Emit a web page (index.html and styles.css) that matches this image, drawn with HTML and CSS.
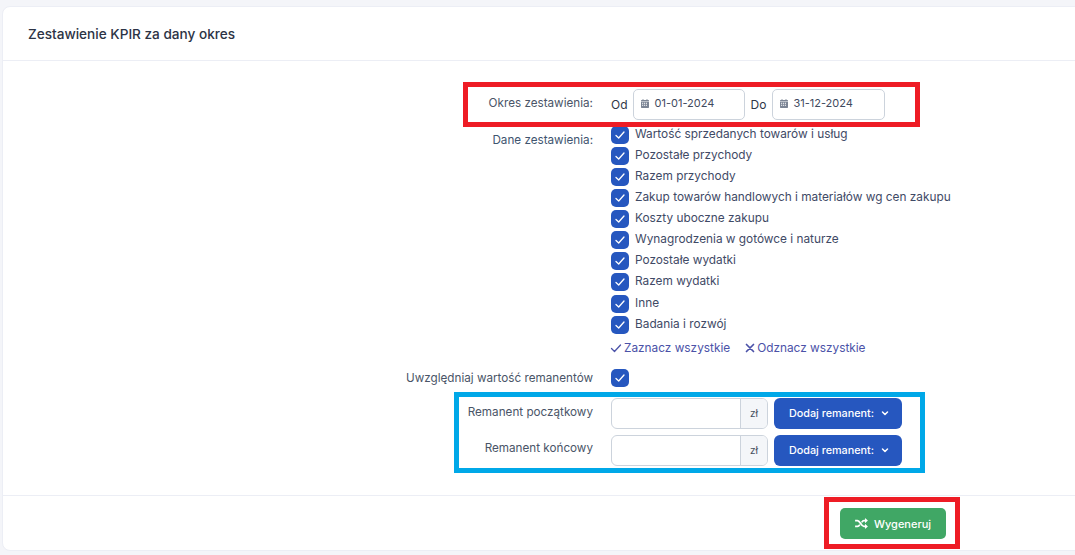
FILE: index.html
```html
<!DOCTYPE html>
<html lang="pl">
<head>
<meta charset="utf-8">
<title>Zestawienie KPIR</title>
<link rel="stylesheet" href="styles.css">
</head>
<body>
<svg class="sprite" aria-hidden="true">
  <symbol id="cal" viewBox="0 0 10 11"><path fill="currentColor" d="M2 0h1v1h4V0h1v1h1.2c.5 0 .8.3.8.8V3H0V1.800C0 1.300.3 1 .8 1H2zM0 3.600h10v6.600c0 .5-.3.800-.8.800H.8c-.5 0-.8-.3-.8-.8zm1.300 1v1.300h1.400V4.600zm2.400 0v1.300h1.400V4.600zm2.400 0v1.300h1.400V4.600zM1.300 7v1.300h1.400V7zm2.400 0v1.300h1.400V7zm2.400 0v1.300h1.400V7z"/></symbol>
  <symbol id="tick" viewBox="0 0 12 12"><path fill="none" stroke="currentColor" stroke-width="1.300" stroke-linecap="round" stroke-linejoin="round" d="M2 6.500 4.700 9 10 3"/></symbol>
  <symbol id="chev" viewBox="0 0 8 8"><path fill="none" stroke="currentColor" stroke-width="1.500" stroke-linecap="round" stroke-linejoin="round" d="M1.500 3 4 5.500 6.500 3"/></symbol>
</svg>
<main class="card">
  <header class="card-head"><h1>Zestawienie KPIR za dany okres</h1></header>
  <section class="card-body">
    <div class="row row-period">
      <div class="label">Okres zestawienia:</div>
      <div class="period">
        <span class="period-word">Od</span>
        <div class="date"><svg class="cal"><use href="#cal"/></svg><span>01-01-2024</span></div>
        <span class="period-word">Do</span>
        <div class="date date-end"><svg class="cal"><use href="#cal"/></svg><span>31-12-2024</span></div>
      </div>
    </div>
    <div class="row row-data">
      <div class="label label-data">Dane zestawienia:</div>
      <div>
        <ul class="checks">
          <li><span class="box"><svg><use href="#tick"/></svg></span>Wartość sprzedanych towarów i usług</li>
          <li><span class="box"><svg><use href="#tick"/></svg></span>Pozostałe przychody</li>
          <li><span class="box"><svg><use href="#tick"/></svg></span>Razem przychody</li>
          <li><span class="box"><svg><use href="#tick"/></svg></span>Zakup towarów handlowych i materiałów wg cen zakupu</li>
          <li><span class="box"><svg><use href="#tick"/></svg></span>Koszty uboczne zakupu</li>
          <li><span class="box"><svg><use href="#tick"/></svg></span>Wynagrodzenia w gotówce i naturze</li>
          <li><span class="box"><svg><use href="#tick"/></svg></span>Pozostałe wydatki</li>
          <li><span class="box"><svg><use href="#tick"/></svg></span>Razem wydatki</li>
          <li><span class="box"><svg><use href="#tick"/></svg></span>Inne</li>
          <li><span class="box"><svg><use href="#tick"/></svg></span>Badania i rozwój</li>
        </ul>
        <div class="links">
          <a class="link"><svg class="link-icon" viewBox="0 0 12 12"><path fill="none" stroke="currentColor" stroke-width="1.300" stroke-linecap="round" stroke-linejoin="round" d="M1.500 6.500 4.500 9.500 10.500 3"/></svg>Zaznacz wszystkie</a>
          <a class="link link-clear"><svg class="link-icon" viewBox="0 0 12 12"><path fill="none" stroke="currentColor" stroke-width="1.700" stroke-linecap="round" d="M2.500 2.500l7 7m0-7-7 7"/></svg>Odznacz wszystkie</a>
        </div>
      </div>
    </div>
    <div class="row row-include">
      <div class="label">Uwzględniaj wartość remanentów</div>
      <span class="box"><svg><use href="#tick"/></svg></span>
    </div>
    <div class="row row-rem row-rem-first">
      <div class="label">Remanent początkowy</div>
      <div class="rem">
        <div class="group"><div class="group-input"></div><div class="group-unit">zł</div></div>
        <button class="btn-blue">Dodaj remanent:<svg class="chev"><use href="#chev"/></svg></button>
      </div>
    </div>
    <div class="row row-rem row-rem-last">
      <div class="label">Remanent końcowy</div>
      <div class="rem">
        <div class="group"><div class="group-input"></div><div class="group-unit">zł</div></div>
        <button class="btn-blue">Dodaj remanent:<svg class="chev"><use href="#chev"/></svg></button>
      </div>
    </div>
  </section>
  <footer class="card-foot">
    <button class="btn-green"><svg class="shuffle" viewBox="0 0 14 12"><path fill="none" stroke="currentColor" stroke-width="1.900" d="M0 2.800h2.600c2.800 0 4.200 6.400 7 6.400H12M0 9.200h2.600c1.100 0 1.900-.9 2.600-2M7.200 4.800c.7-1.100 1.400-2 2.400-2H12"/><path fill="currentColor" d="M10.800 0 14 2.800l-3.200 2.800zM10.800 6.400 14 9.200 10.800 12z"/></svg>Wygeneruj</button>
  </footer>
</main>
<div class="mark mark-red mark-period"></div>
<div class="mark mark-blue"></div>
<div class="mark mark-red mark-submit"></div>
</body>
</html>
```
FILE: styles.css
```css
* { box-sizing: border-box; }
html, body { margin: 0; height: 555px; overflow: hidden; }
body {
  background: #f4f5f9;
  font-family: Inter, "Liberation Sans", sans-serif;
  color: #3f4a5e;
  padding: 6px 0 0 2px;
  position: relative;
}
.sprite { display: none; }
.card {
  width: 1100px;
  height: 545px;
  background: #fff;
  border: 1px solid #eceef5;
  border-radius: 8px 0 0 8px;
  display: flex;
  flex-direction: column;
}
.card-head {
  height: 54px;
  padding: 0 0 0 25px;
  border-bottom: 1px solid #eceef5;
  display: flex;
  align-items: center;
}
h1 {
  margin: 0;
  font-size: 13.600px;
  font-weight: 500;
  color: #2c3345;
}
.card-body { flex: 1; padding-top: 29px; }
.card-foot {
  height: 55px;
  border-top: 1px solid #eceef5;
  padding: 12px 0 0 837px;
}
.row {
  display: grid;
  grid-template-columns: 590px 1fr;
  column-gap: 18px;
  align-items: start;
}
.label {
  text-align: right;
  font-size: 11.700px;
  line-height: 14px;
  color: #4a5568;
}
.row-period { height: 37px; }
.row-period .label { padding-top: 6px; }
.label-data { padding-top: 6px; color: #3f5570; }
.period { display: flex; align-items: center; margin-top: -1px; }
.period-word { font-size: 12px; color: #2f3747; }
.date {
  width: 112px;
  height: 31px;
  margin: 0 6px 0 5px;
  border: 1px solid #ccd3dc;
  border-radius: 5px;
  display: flex;
  align-items: center;
  padding: 0 0 3px 7px;
  font-size: 11px;
  color: #3f4a5e;
  gap: 6px;
}
.date-end { width: 113px; margin: 0 0 0 6px; gap: 5px; }
.cal { width: 8px; height: 9px; color: #7b8494; }
.checks { list-style: none; margin: 0 0 .35px; padding: 0; }
.checks li {
  height: 21.065px;
  display: flex;
  align-items: flex-start;
  gap: 6px;
  font-size: 11.840px;
  line-height: 14px;
  color: #3f4a66;
}
.box {
  flex: none;
  width: 18px;
  height: 18px;
  border-radius: 5px;
  background: #2657bf;
  color: #fff;
  display: flex;
  align-items: center;
  justify-content: center;
}
.checks .box { margin-top: -1px; }
.box svg { width: 12px; height: 12px; }
.links { display: flex; gap: 14px; margin-top: 3px; margin-left: -1px; }
.link {
  display: flex;
  align-items: center;
  gap: 2px;
  font-size: 11.840px;
  line-height: 14px;
  color: #4b52a8;
}
.link-clear { gap: 1px; }
.link-icon { width: 12px; height: 12px; }
.row-include { margin-top: 14px; align-items: center; }
.row-rem { height: 37px; }
.row-rem-first { margin-top: 11px; }
.row-rem .label { padding-top: 7px; }
.row-rem-last .label { padding-top: 6px; }
.rem { display: flex; gap: 6px; }
.group {
  width: 157px;
  height: 31px;
  display: flex;
  border: 1px solid #ccd3dc;
  border-radius: 6px;
  overflow: hidden;
}
.group-input { flex: 1; }
.group-unit {
  width: 27px;
  background: #f4f6f9;
  border-left: 1px solid #ccd3dc;
  font-size: 10px;
  color: #46505f;
  display: flex;
  align-items: center;
  justify-content: center;
}
.btn-blue {
  width: 128px;
  height: 31px;
  border: 0;
  border-radius: 6px;
  background: #2657bf;
  color: #fff;
  font: 500 10.800px Inter, "Liberation Sans", sans-serif;
  display: flex;
  align-items: center;
  gap: 7px;
  padding: 0 0 0 15px;
}
.chev { width: 8px; height: 8px; }
.btn-green {
  width: 106px;
  height: 31px;
  border: 0;
  border-radius: 5px;
  background: #40a765;
  color: #fff;
  font: 500 11px Inter, "Liberation Sans", sans-serif;
  display: flex;
  align-items: center;
  justify-content: center;
  gap: 6px;
  padding: 0;
}
.shuffle { width: 13px; height: 11px; }
.mark { position: absolute; pointer-events: none; }
.mark-red { border: 5px solid #ee1c25; }
.mark-blue { border: 5px solid #00a8e8; left: 454px; top: 392px; width: 471px; height: 81px; }
.mark-period { left: 463px; top: 82px; width: 457px; height: 45px; }
.mark-submit { left: 824px; top: 497px; width: 136px; height: 52px; }
```
